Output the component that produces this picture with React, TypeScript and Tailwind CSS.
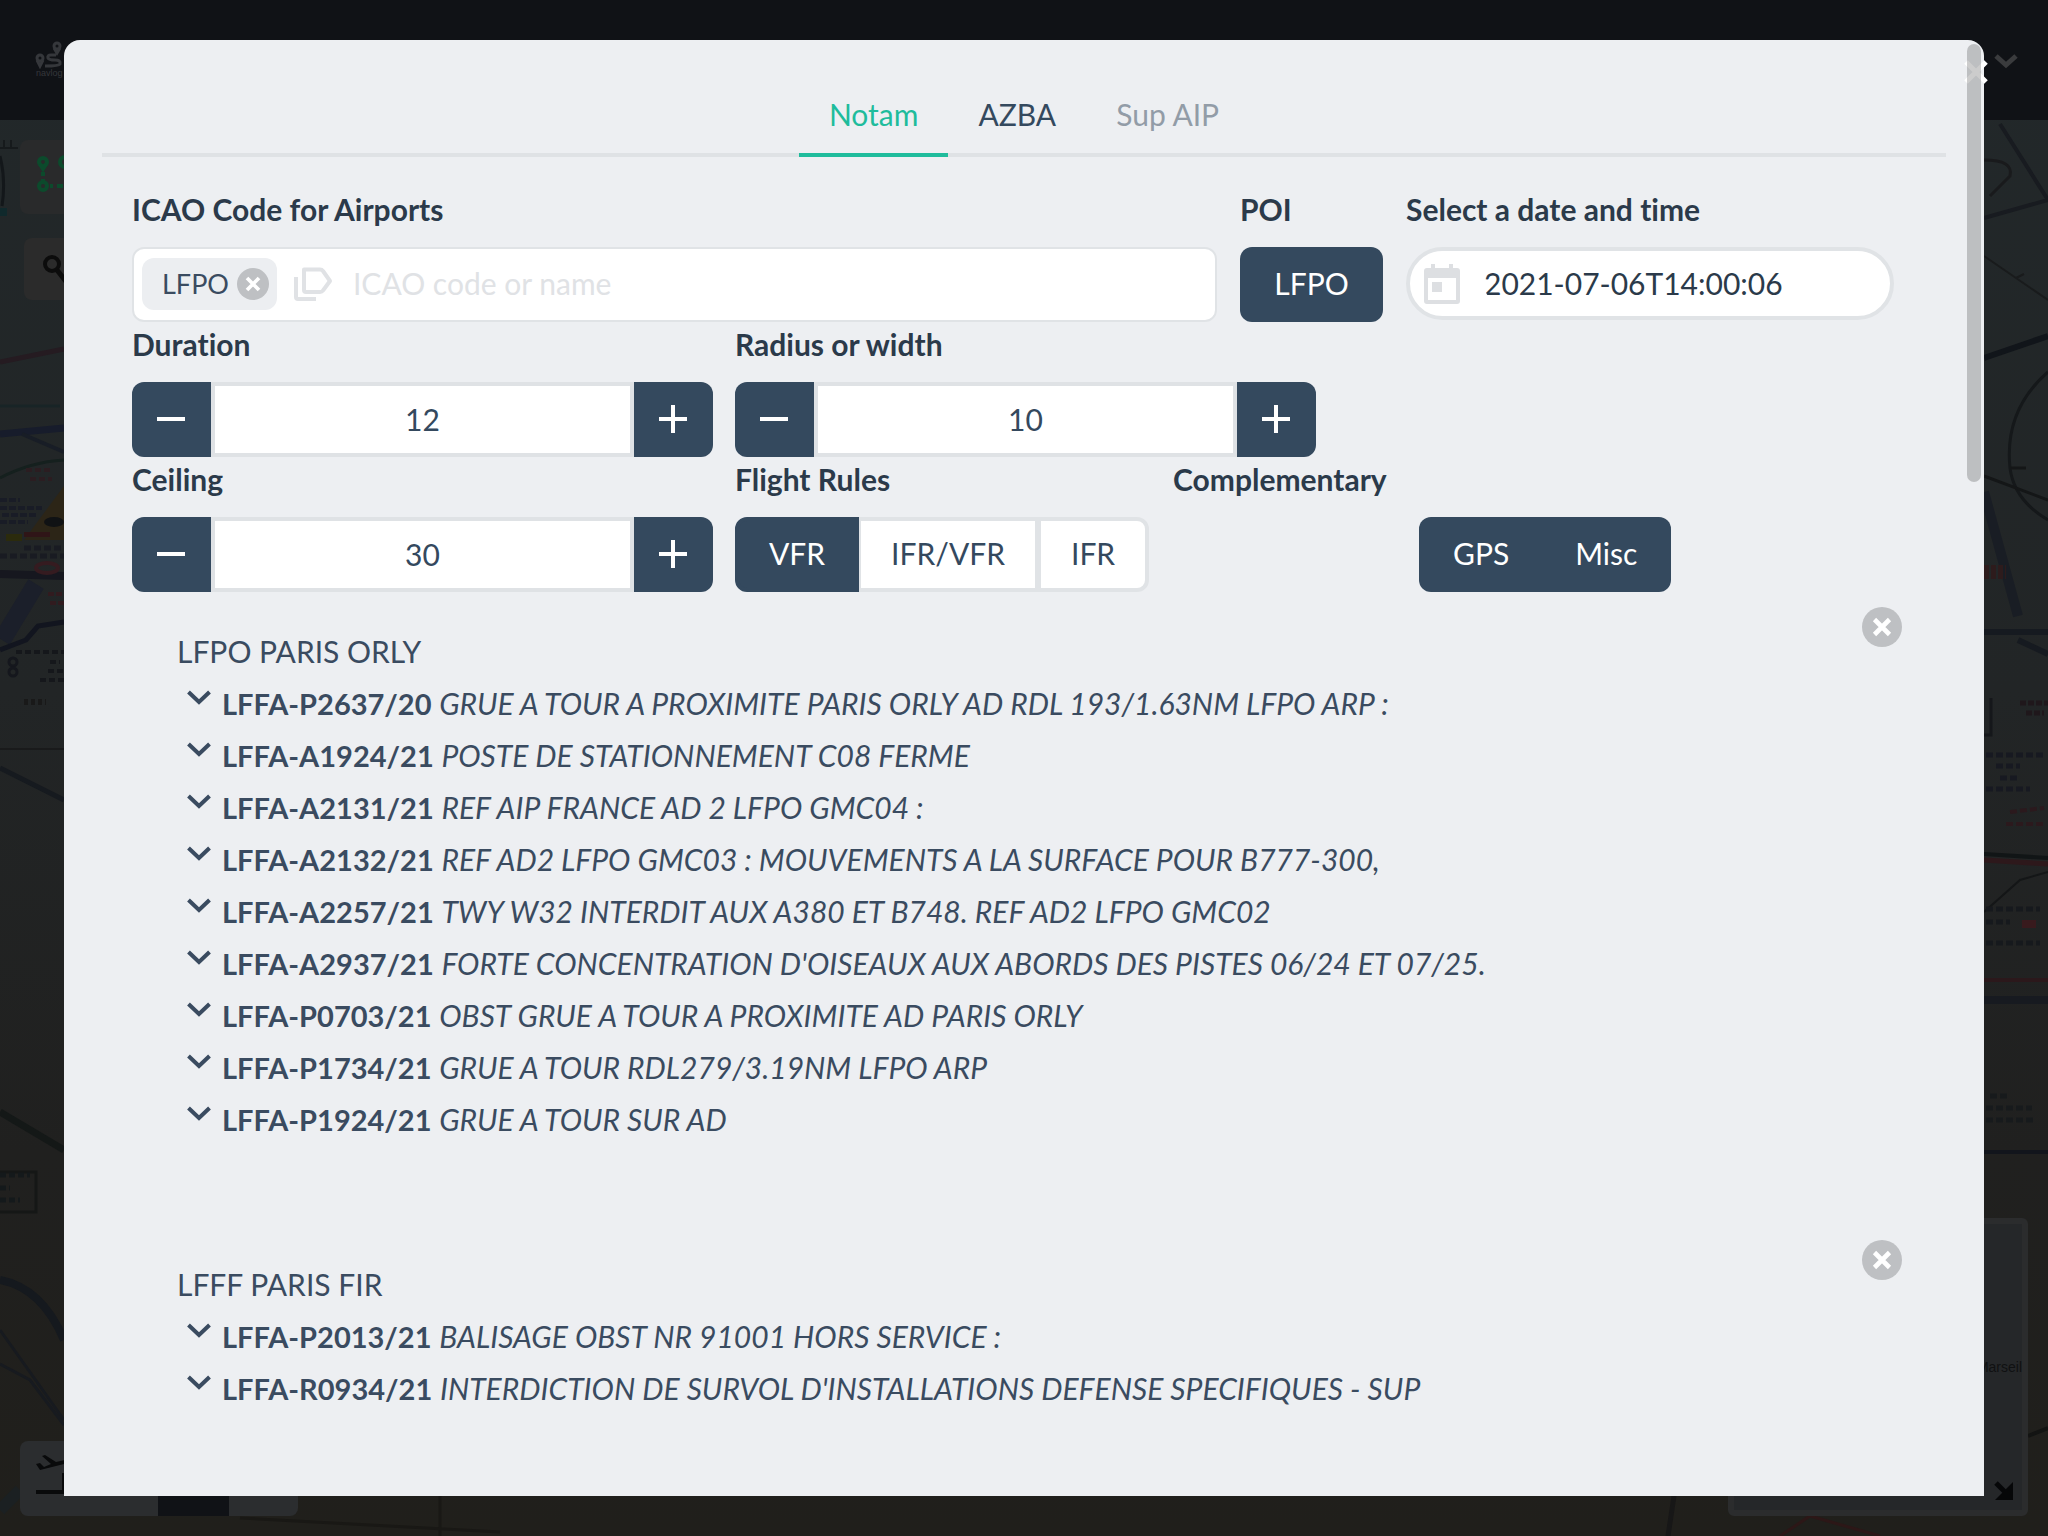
import { useState } from "react";

type Notam = { id: string; text: string };
type Group = { title: string; items: Notam[] };

const groups: Group[] = [
  {
    title: "LFPO PARIS ORLY",
    items: [
      { id: "LFFA-P2637/20", text: "GRUE A TOUR A PROXIMITE PARIS ORLY AD RDL 193/1.63NM LFPO ARP :" },
      { id: "LFFA-A1924/21", text: "POSTE DE STATIONNEMENT C08 FERME" },
      { id: "LFFA-A2131/21", text: "REF AIP FRANCE AD 2 LFPO GMC04 :" },
      { id: "LFFA-A2132/21", text: "REF AD2 LFPO GMC03 : MOUVEMENTS A LA SURFACE POUR B777-300," },
      { id: "LFFA-A2257/21", text: "TWY W32 INTERDIT AUX A380 ET B748. REF AD2 LFPO GMC02" },
      { id: "LFFA-A2937/21", text: "FORTE CONCENTRATION D'OISEAUX AUX ABORDS DES PISTES 06/24 ET 07/25." },
      { id: "LFFA-P0703/21", text: "OBST GRUE A TOUR A PROXIMITE AD PARIS ORLY" },
      { id: "LFFA-P1734/21", text: "GRUE A TOUR RDL279/3.19NM LFPO ARP" },
      { id: "LFFA-P1924/21", text: "GRUE A TOUR SUR AD" },
    ],
  },
  {
    title: "LFFF PARIS FIR",
    items: [
      { id: "LFFA-P2013/21", text: "BALISAGE OBST NR 91001 HORS SERVICE :" },
      { id: "LFFA-R0934/21", text: "INTERDICTION DE SURVOL D'INSTALLATIONS DEFENSE SPECIFIQUES - SUP" },
    ],
  },
];

const labelClass = "mb-4 block leading-[44px] font-bold text-[#2b3a4a]";

function CrossIcon({ className }: { className: string }) {
  return (
    <svg viewBox="0 0 40 40" className={className} aria-hidden="true">
      <circle cx="20" cy="20" r="20" fill="#bec0c3" />
      <path d="M12.500 12.500 27.500 27.500M27.500 12.500 12.500 27.500" stroke="#fff" strokeWidth="4.6" />
    </svg>
  );
}

function Stepper({ id, label, initial }: { id: string; label: string; initial: number }) {
  const [value, setValue] = useState(initial);
  const button = "flex h-full w-[79px] shrink-0 items-center justify-center bg-[#34495e] pr-0.5 pb-0.5 text-white";
  return (
    <div className="w-[581px]">
      <label htmlFor={id} className={labelClass}>
        {label}
      </label>
      <div className="flex h-[75px]">
        <button type="button" aria-label={"Decrease " + label} onClick={() => setValue(value - 1)} className={button + " rounded-l-xl"}>
          <svg viewBox="0 0 28 28" className="size-7" aria-hidden="true">
            <path d="M0 14h28" stroke="currentColor" strokeWidth="4" />
          </svg>
        </button>
        <input
          id={id}
          type="text"
          inputMode="numeric"
          value={value}
          onChange={(e) => setValue(Number(e.target.value) || 0)}
          className="h-full min-w-0 flex-1 border-4 border-[#dfe2e5] bg-white pb-0.5 text-center outline-none"
        />
        <button type="button" aria-label={"Increase " + label} onClick={() => setValue(value + 1)} className={button + " rounded-r-xl"}>
          <svg viewBox="0 0 28 28" className="size-7" aria-hidden="true">
            <path d="M0 14h28M14 0v28" stroke="currentColor" strokeWidth="4" />
          </svg>
        </button>
      </div>
    </div>
  );
}

function NotamGroup({ group }: { group: Group }) {
  return (
    <section className="relative mb-[113px] px-[45px] text-[#3a4b60]">
      <button type="button" aria-label={"Remove " + group.title} className="absolute top-[-18px] right-[14px]">
        <CrossIcon className="size-10" />
      </button>
      <h2 className="leading-[52px]">{group.title}</h2>
      <ul>
        {group.items.map((n) => (
          <li key={n.id} className="flex h-[52px] items-center">
            <button type="button" aria-label={"Expand " + n.id} className="flex w-[45px] shrink-0 pb-3 pl-[10px]">
              <svg viewBox="0 0 24 15" className="h-[15px] w-6" aria-hidden="true">
                <path d="M1.500 2 12 12 22.500 2" fill="none" stroke="currentColor" strokeWidth="4" />
              </svg>
            </button>
            <p className="leading-[52px] whitespace-nowrap">
              <strong className="text-[29px]">{n.id}</strong> <em>{n.text}</em>
            </p>
          </li>
        ))}
      </ul>
    </section>
  );
}

function MapBackdrop() {
  return (
    <svg viewBox="0 0 2048 1536" preserveAspectRatio="none" className="absolute inset-0 size-full" aria-hidden="true">
      <defs>
        <linearGradient id="land" x1="0" y1="0" x2="0" y2="1">
          <stop offset="0" stopColor="#22282a" />
          <stop offset="0.45" stopColor="#222526" />
          <stop offset="0.75" stopColor="#20201f" />
          <stop offset="1" stopColor="#201f1b" />
        </linearGradient>
      </defs>
      <rect width="2048" height="1536" fill="url(#land)" />
      <g fill="none">
        <path d="M0 148H18M4 140v8M11 140v8" stroke="#161a1c" strokeWidth="2" />
        <path d="M0 156Q6 180 2 206" stroke="#13171a" strokeWidth="3" />
        <path d="M0 212H7" stroke="#10292c" strokeWidth="8" />
        <path d="M0 362 64 349" stroke="#251b21" strokeWidth="5" />
        <path d="M0 406H60" stroke="#182426" strokeWidth="3" />
        <path d="M0 434 64 428" stroke="#171c2b" strokeWidth="7" />
        <path d="M22 434 64 452" stroke="#181d26" strokeWidth="4" />
        <path d="M0 478Q30 462 64 460" stroke="#15201e" strokeWidth="3" />
        <path d="M0 500H20M0 508H42M2 515H38M0 522H28" stroke="#191c26" strokeWidth="4" strokeDasharray="7 2" />
        <path d="M24 548H64M0 556H64" stroke="#191b22" strokeWidth="5" strokeDasharray="7 3" />
        <path d="M26 470H50M30 479H52" stroke="#2b1d21" strokeWidth="4" strokeDasharray="6 3" />
        <path d="M0 574 64 576" stroke="#16171f" strokeWidth="8" />
        <path d="M2 640 36 584" stroke="#1b1f2a" strokeWidth="18" />
        <path d="M0 650 26 640 38 626 64 622" stroke="#12151f" strokeWidth="5" />
        <path d="M48 594H64M50 603H64" stroke="#311b1f" strokeWidth="4" strokeDasharray="6 2" />
        <path d="M16 652H64M50 662H60M48 671H64M40 680H64" stroke="#15171b" strokeWidth="4" strokeDasharray="6 3" />
        <circle cx="13" cy="662" r="4" stroke="#15171d" strokeWidth="3" />
        <circle cx="13" cy="672" r="4" stroke="#15171d" strokeWidth="3" />
        <path d="M24 702H46" stroke="#191919" strokeWidth="6" strokeDasharray="4 3" />
        <path d="M0 749H64" stroke="#191a1b" strokeWidth="2" />
        <path d="M0 768 64 800" stroke="#161a1f" strokeWidth="5" />
        <path d="M0 1112 64 1150" stroke="#141817" strokeWidth="7" />
        <path d="M0 1172H36V1212H0" stroke="#151716" strokeWidth="3" />
        <path d="M0 1175H30M0 1188H10M0 1200H20" stroke="#14191b" strokeWidth="5" strokeDasharray="6 3" />
        <path d="M0 1280Q42 1288 64 1340" stroke="#15191e" strokeWidth="8" />
        <path d="M0 1330 64 1420M0 1364 30 1380 64 1425" stroke="#171a1f" strokeWidth="3" />
        <path d="M0 1510 20 1490" stroke="#1b2022" strokeWidth="12" />
        <path d="M240 1518 500 1532M440 1496V1536" stroke="#191815" strokeWidth="3" />
        <path d="M1780 1536 1810 1516 1880 1536" stroke="#2c1717" strokeWidth="3" />
        <path d="M1674 1496 1668 1536" stroke="#171717" strokeWidth="5" />
        <path d="M1984 358 2048 336" stroke="#11151a" strokeWidth="6" />
        <path d="M2000 124 2048 200M1984 218 2048 200" stroke="#181b20" strokeWidth="4" />
        <path d="M1984 160Q2014 160 2010 176L1990 196" stroke="#191a1c" strokeWidth="3" />
        <path d="M1984 256 2048 300M2016 278 2024 274" stroke="#191b1c" strokeWidth="2" />
        <path d="M2048 372Q2004 410 2010 468 2014 500 2048 520" stroke="#15181a" strokeWidth="3" />
        <path d="M2010 468H2026M1984 476 2048 500" stroke="#141617" strokeWidth="3" />
        <path d="M1984 492 2018 616" stroke="#191d24" strokeWidth="10" />
        <path d="M2018 640 2048 654M1984 632H2048" stroke="#161a20" strokeWidth="6" />
        <path d="M1984 572H2006" stroke="#2d1b1c" strokeWidth="14" strokeDasharray="5 2" />
        <path d="M1991 698V735H1984" stroke="#15171a" strokeWidth="3" />
        <path d="M2020 703H2048M2026 713H2044" stroke="#1f171b" strokeWidth="5" strokeDasharray="6 2" />
        <path d="M1986 755H2044M1996 766H2020M2000 778H2018M1986 789H2030" stroke="#171921" strokeWidth="5" strokeDasharray="7 3" />
        <path d="M2010 812 2044 808M2006 824H2044" stroke="#2b191d" strokeWidth="4" strokeDasharray="7 3" />
        <path d="M1984 854 2048 858" stroke="#111516" strokeWidth="4" />
        <path d="M1984 860 2048 864" stroke="#2d181b" strokeWidth="5" />
        <path d="M1984 912 2020 880 2048 872" stroke="#141617" strokeWidth="2" />
        <path d="M1986 909H2040M1986 922H2010M1986 943H2040" stroke="#16191d" strokeWidth="5" strokeDasharray="7 3" />
        <path d="M2022 924H2036" stroke="#381a1d" strokeWidth="8" />
        <path d="M1984 980H2048" stroke="#2b181b" strokeWidth="4" />
        <path d="M1984 1000H2048" stroke="#171a20" strokeWidth="8" />
        <path d="M1990 1096H2010M1986 1108H2032M1986 1120H2036" stroke="#171a1c" strokeWidth="5" strokeDasharray="7 3" />
        <path d="M1984 1152H2048" stroke="#12151c" strokeWidth="4" />
        <path d="M2028 1436 2048 1428" stroke="#131413" strokeWidth="4" />
      </g>
      <path d="M64 486 24 540H64Z" fill="#2c2517" />
      <ellipse cx="54" cy="522" rx="10" ry="5" fill="#101214" />
      <ellipse cx="47" cy="568" rx="11" ry="5" fill="none" stroke="#351b20" strokeWidth="4" />
      <path d="M6 534h16v7H6z" fill="#2b2b0d" />
      <path d="M24 532h26v5H24z" fill="#2f1517" />
    </svg>
  );
}

function Backdrop() {
  return (
    <div className="absolute inset-0 overflow-hidden bg-[#222526]" aria-hidden="true">
      <MapBackdrop />
      <div className="relative h-[120px] bg-[#101216]">
        <svg viewBox="0 0 30 28" className="absolute top-[41px] left-[35px] h-7 w-[30px]" fill="none" stroke="#35373b" strokeWidth="3">
          <circle cx="5" cy="17" r="3" />
          <path d="M2 19 5 25 8 19" />
          <circle cx="22" cy="5" r="3" />
          <path d="M19 7 22 12 25 7M21 14H16Q12 14 13 17 14 19 20 19 26 19 25 23 24 25 10 25" />
        </svg>
        <span className="absolute top-[65px] left-[36px] font-['Liberation_Sans'] text-[9px] leading-4 text-[#35373b]">navlog</span>
        <svg viewBox="0 0 24 15" className="absolute top-[54px] right-[30px] h-[15px] w-6">
          <path d="M2 2 12 11 22 2" fill="none" stroke="#3a3b3d" strokeWidth="5" />
        </svg>
      </div>
      <div className="absolute top-[140px] left-5 h-[74px] w-40 rounded-lg bg-[#292a2b]">
        <svg viewBox="0 0 40 40" className="absolute top-[15px] left-[15px] size-10" fill="none" stroke="#0c4a2c" strokeWidth="4">
          <circle cx="8" cy="7" r="4" />
          <path d="M5 9 8 14 11 9M8 17V21" />
          <circle cx="8" cy="31" r="4" />
          <path d="M8 24V28M15 31h3M22 31h6" />
          <circle cx="30" cy="7" r="5" />
        </svg>
      </div>
      <div className="absolute top-[238px] left-6 h-[62px] w-40 rounded-lg bg-[#2b2b2b]">
        <svg viewBox="0 0 30 30" className="absolute top-4 left-[18px] size-[30px]" fill="none" stroke="#0c0c0c" strokeWidth="4">
          <circle cx="10" cy="10" r="7" />
          <path d="M15 16 26 30" strokeWidth="5" />
        </svg>
      </div>
      <div className="absolute bottom-[20px] left-5 flex h-[75px] w-[278px] rounded-lg bg-[#2b2d2f]">
        <svg viewBox="0 0 40 44" className="mt-3 ml-4 h-11 w-10" fill="#090a0b">
          <path d="M0 11 4 10 8 14 15 11 6 3 9 2 20 9 29 7 28 11 4 17Z" />
          <path d="M0 37h40v4H0zM26 20h8v18h-8z" />
        </svg>
        <div className="ml-[82px] w-[71px] bg-[#101216]" />
      </div>
      <div className="absolute right-[20px] bottom-[20px] h-[298px] w-[300px] rounded-md border-[6px] border-[#2b2c2d] bg-[#252729]">
        <span className="absolute top-[133px] right-0 font-['Liberation_Sans'] text-[14px] leading-5 text-[#101112]">Marseil</span>
        <svg viewBox="0 0 20 20" className="absolute right-2 bottom-[9px] size-5">
          <path d="M2 2 12 12" stroke="#060708" strokeWidth="5" />
          <path d="M19 1V19H1Z" fill="#060708" />
        </svg>
      </div>
    </div>
  );
}

export default function App() {
  const [tab, setTab] = useState("Notam");
  const [rule, setRule] = useState("VFR");
  return (
    <div className="relative flex h-screen overflow-hidden px-16 py-10 font-[Lato,sans-serif] text-[30px] leading-[45px] text-[#34495e] [font-variant-ligatures:none]">
      <Backdrop />
      <main className="relative z-10 min-w-0 flex-1 overflow-hidden rounded-t-2xl bg-[#edeff2] px-[38px] pt-[38px]">
        <nav className="flex justify-center border-b-4 border-[#dfe2e5]" role="tablist">
          {["Notam", "AZBA", "Sup AIP"].map((name) => (
            <button
              key={name}
              type="button"
              role="tab"
              aria-selected={tab === name}
              disabled={name === "Sup AIP"}
              onClick={() => setTab(name)}
              className={
                "-mb-1 border-b-4 px-[30px] pt-[14px] pb-4 " +
                (tab === name
                  ? "border-[#1fbc9c] text-[#1fbc9c]"
                  : name === "Sup AIP"
                    ? "border-transparent text-[#929ca7]"
                    : "border-transparent text-[#34495e]")
              }
            >
              {name}
            </button>
          ))}
        </nav>

        <div className="p-[30px]">
          <div className="mr-[22px] flex gap-[23px]">
            <div className="min-w-0 flex-1">
              <label htmlFor="icao" className={labelClass}>
                ICAO Code for Airports
              </label>
              <div className="flex h-[75px] items-center rounded-xl border-2 border-[#e0e3e6] bg-white px-2 pb-0.5 text-[#3a4b60]">
                <span className="flex h-[52px] items-center gap-2 rounded-xl bg-[#eceef1] pr-2 pl-5 text-[27px]">
                  LFPO
                  <button type="button" aria-label="Remove LFPO">
                    <CrossIcon className="size-8" />
                  </button>
                </span>
                <svg viewBox="0 0 40 36" className="mr-5 ml-4 h-9 w-10 shrink-0" fill="none" stroke="#e0e2e5" strokeWidth="4" aria-hidden="true">
                  <path d="M11 3.500H27Q29 3.500 30 5L37 15 30 24.500Q29 26 27 26H13Q11 26 11 24Z" strokeLinejoin="round" />
                  <path d="M3 11V31Q3 33 5 33H23" />
                </svg>
                <input id="icao" type="text" placeholder="ICAO code or name" className="min-w-0 flex-1 bg-transparent outline-none placeholder:text-[#e0e2e5]" />
              </div>
            </div>
            <div>
              <span className={labelClass}>POI</span>
              <button type="button" className="h-[75px] w-[143px] rounded-xl bg-[#34495e] pb-0.5 text-white">
                LFPO
              </button>
            </div>
            <div className="w-[488px]">
              <label htmlFor="date" className={labelClass}>
                Select a date and time
              </label>
              <div className="flex h-[73px] items-center rounded-full border-4 border-[#e0e3e6] bg-white pl-[14px]">
                <svg viewBox="0 0 36 40" className="mr-6 h-10 w-9 shrink-0" fill="#dddfe2" aria-hidden="true">
                  <path d="M3 4H7V0H11V4H25V0H29V4H33Q36 4 36 7V37Q36 40 33 40H3Q0 40 0 37V7Q0 4 3 4ZM4 14V36H32V14Z" fillRule="evenodd" />
                  <path d="M8 18h10v10H8z" />
                </svg>
                <input id="date" type="text" defaultValue="2021-07-06T14:00:06" className="min-w-0 flex-1 rounded-full bg-transparent text-[#2b3a4a] outline-none" />
              </div>
            </div>
          </div>

          <div className="flex gap-[22px]">
            <Stepper id="duration" label="Duration" initial={12} />
            <Stepper id="radius" label="Radius or width" initial={10} />
          </div>

          <div className="flex gap-[22px]">
            <Stepper id="ceiling" label="Ceiling" initial={30} />
            <fieldset>
              <legend className={labelClass}>Flight Rules</legend>
              <div className="flex h-[75px] w-[416px]">
                {["VFR", "IFR/VFR", "IFR"].map((name, i) => (
                  <button
                    key={name}
                    type="button"
                    aria-pressed={rule === name}
                    onClick={() => setRule(name)}
                    className={
                      "h-full border-4 px-[30px] pb-0.5 " +
                      (i === 0 ? "rounded-l-xl " : "-ml-0.5 ") +
                      (i === 2 ? "rounded-r-xl " : "") +
                      (rule === name ? "relative border-[#34495e] bg-[#34495e] text-white" : "border-[#e0e3e6] bg-white")
                    }
                  >
                    {name}
                  </button>
                ))}
              </div>
            </fieldset>
            <fieldset>
              <legend className={labelClass}>Complementary</legend>
              <div className="ml-[246px] flex h-[75px]">
                <button type="button" aria-pressed="true" className="h-full rounded-l-xl bg-[#34495e] pr-[33px] pb-0.5 pl-[34px] text-white">
                  GPS
                </button>
                <button type="button" aria-pressed="true" className="h-full rounded-r-xl bg-[#34495e] pr-[34px] pb-0.5 pl-[33px] text-white">
                  Misc
                </button>
              </div>
            </fieldset>
          </div>

          <div className="pt-[33px]">
            {groups.map((g) => (
              <NotamGroup key={g.title} group={g} />
            ))}
          </div>
        </div>
      </main>
      <button type="button" aria-label="Close" className="absolute top-[60px] right-[60px] z-20">
        <svg viewBox="0 0 24 24" className="size-6" aria-hidden="true">
          <path d="M2 2 22 22M22 2 2 22" stroke="#fff" strokeWidth="5" />
        </svg>
      </button>
      <div className="absolute top-[44px] right-[67px] z-30 h-[438px] w-[14px] rounded-full bg-black/20" />
    </div>
  );
}
